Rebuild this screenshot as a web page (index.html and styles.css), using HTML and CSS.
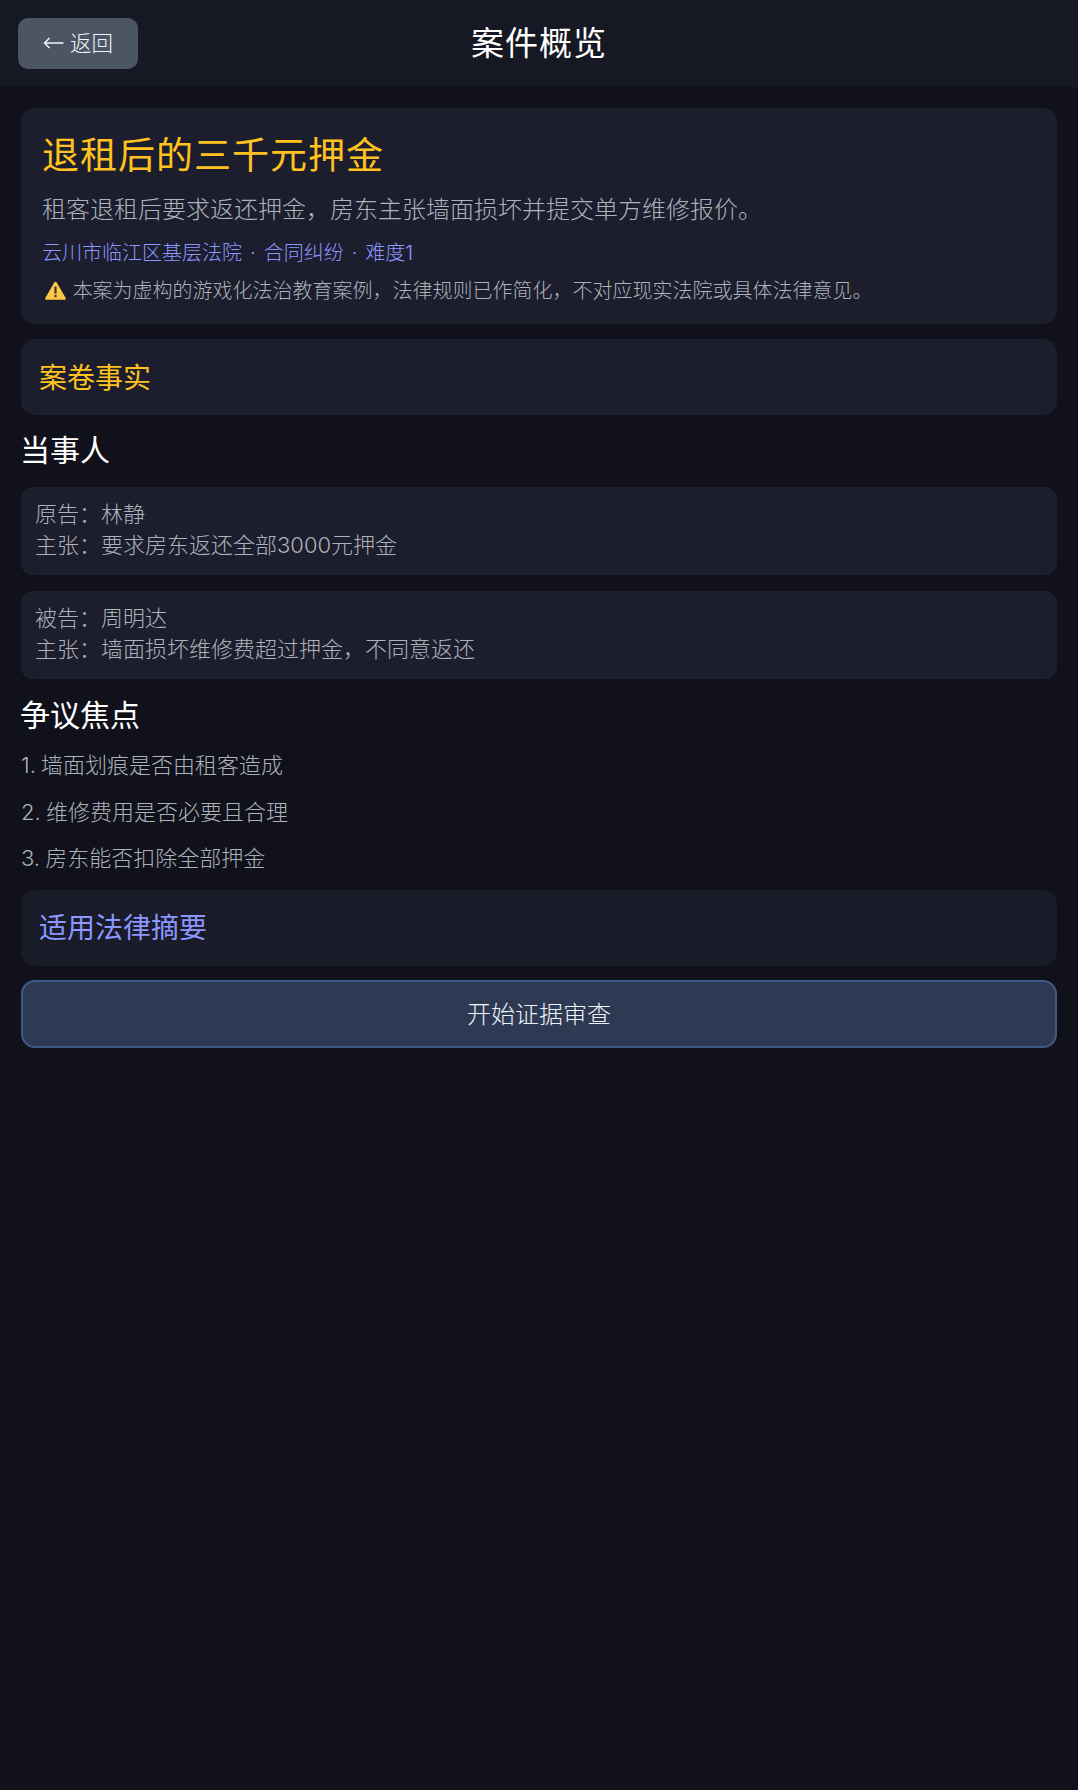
FILE: index.html
```html
<!DOCTYPE html>
<html lang="zh-CN">
<head>
    <meta charset="utf-8">
    <title>案件概览</title>
    <link rel="stylesheet" href="styles.css">
</head>
<body>
    <header class="top-bar">
        <button class="back-btn">
            <svg class="back-icon" viewBox="0 0 21 12" aria-hidden="true">
                <path d="M20.500 6H1.500M6.500 1 1.500 6l5 5" fill="none" stroke="#f3f4f6" stroke-width="1.500"/>
            </svg>
            返回
        </button>
        <h1 class="top-title">案件概览</h1>
    </header>

    <main class="content">
        <section class="card case-card">
            <h2 class="case-title">退租后的三千元押金</h2>
            <p class="case-summary">租客退租后要求返还押金，房东主张墙面损坏并提交单方维修报价。</p>
            <p class="case-meta">云川市临江区基层法院<span class="dot">·</span>合同纠纷<span class="dot">·</span>难度1</p>
            <p class="case-note">
                <svg class="warn-icon" viewBox="0 0 20 18" aria-hidden="true">
                    <path d="M10 .6c.5 0 .9.3 1.2.7l8.4 14.6c.5.9-.1 1.900-1.100 1.900H1.500c-1 0-1.600-1-1.100-1.900L8.800 1.300c.3-.4.7-.7 1.200-.7z" fill="#fcc845"/>
                    <rect x="9" y="5.200" width="2" height="6.800" fill="#3a3420"/>
                    <rect x="9" y="13.200" width="2" height="2.200" fill="#3a3420"/>
                </svg>
                本案为虚构的游戏化法治教育案例，法律规则已作简化，不对应现实法院或具体法律意见。
            </p>
        </section>

        <section class="card fold-card">
            <h3 class="fold-title gold">案卷事实</h3>
        </section>

        <h3 class="section-title">当事人</h3>
        <div class="party-card">
            <div>原告：林静</div>
            <div>主张：要求房东返还全部3000元押金</div>
        </div>
        <div class="party-card">
            <div>被告：周明达</div>
            <div>主张：墙面损坏维修费超过押金，不同意返还</div>
        </div>

        <h3 class="section-title focus-title">争议焦点</h3>
        <ol class="focus-list">
            <li>1. 墙面划痕是否由租客造成</li>
            <li>2. 维修费用是否必要且合理</li>
            <li>3. 房东能否扣除全部押金</li>
        </ol>

        <section class="card fold-card law-card">
            <h3 class="fold-title indigo">适用法律摘要</h3>
        </section>

        <button class="start-btn">开始证据审查</button>
    </main>
</body>
</html>
```

FILE: styles.css
```css
body {
    margin: 0;
    min-height: 100vh;
    background-color: #10111a;
    font-family: Inter, "Noto Sans CJK SC", sans-serif;
    font-weight: 300;
    color: #adb2bb;
}

h1, h2, h3, p, ol {
    margin: 0;
    padding: 0;
    font-weight: 300;
}

.top-bar {
    position: relative;
    display: flex;
    align-items: center;
    justify-content: center;
    height: 87px;
    padding-bottom: 5px;
    box-sizing: border-box;
    background-color: #161823;
}

.back-btn {
    position: absolute;
    left: 18px;
    top: 18px;
    width: 120px;
    height: 51px;
    border: none;
    border-radius: 10px;
    background-color: #4b5563;
    color: #f3f4f6;
    font-family: inherit;
    font-weight: 300;
    font-size: 21.500px;
    padding: 0 0 4px;
}

.back-icon {
    width: 21px;
    height: 12px;
    vertical-align: 2px;
}

.top-title {
    font-size: 33px;
    font-weight: 400;
    color: #fff;
    letter-spacing: 1px;
}

.content {
    padding: 21px 21px 0;
}

.card {
    background-color: #1c1e2d;
    border-radius: 14px;
}

.case-card {
    box-sizing: border-box;
    height: 216px;
    padding: 24px 21px 0;
}

.case-title {
    font-size: 37px;
    font-weight: 400;
    line-height: 48px;
    color: #ffc21e;
    letter-spacing: 1px;
}

.case-summary {
    margin-top: 13px;
    font-size: 24px;
    line-height: 34px;
}

.case-meta {
    margin-top: 12px;
    font-size: 20px;
    line-height: 28px;
    color: #8c96ff;
}

.dot {
    padding: 0 8px;
}

.case-note {
    margin-top: 10px;
    padding-left: 3px;
    font-size: 20px;
    line-height: 28px;
}

.warn-icon {
    width: 21px;
    height: 19px;
    vertical-align: -2px;
    margin-right: 1px;
}

.fold-card {
    box-sizing: border-box;
    margin-top: 15px;
    height: 76px;
    padding: 0 18px 3px;
    display: flex;
    align-items: center;
}

.fold-title {
    font-size: 28px;
    font-weight: 400;
}

.gold {
    color: #ffc21e;
}

.indigo {
    color: #8c96ff;
}

.section-title {
    margin: 15px 0 0 -1px;
    font-size: 30px;
    font-weight: 400;
    line-height: 40px;
    color: #fff;
}

.focus-title {
    margin-top: 16px;
}

.party-card {
    margin-top: 17px;
    padding: 12px 14px 14px;
    background-color: #1c1e2d;
    border-radius: 12px;
    font-size: 22px;
    line-height: 31px;
}

.party-card + .party-card {
    margin-top: 16px;
}

.focus-list {
    list-style: none;
    margin-top: 15px;
}

.focus-list li {
    font-size: 22px;
    line-height: 30px;
    margin-bottom: 16.500px;
    word-spacing: -1px;
}

.law-card {
    margin-top: 1px;
    background-color: #191b29;
}

.start-btn {
    display: block;
    width: 100%;
    height: 68px;
    margin-top: 14px;
    padding: 0 0 2px;
    border: 2px solid #3f5a82;
    border-radius: 14px;
    background-color: #2e3a54;
    color: #eef1f6;
    font-family: inherit;
    font-weight: 300;
    font-size: 24px;
}
```
